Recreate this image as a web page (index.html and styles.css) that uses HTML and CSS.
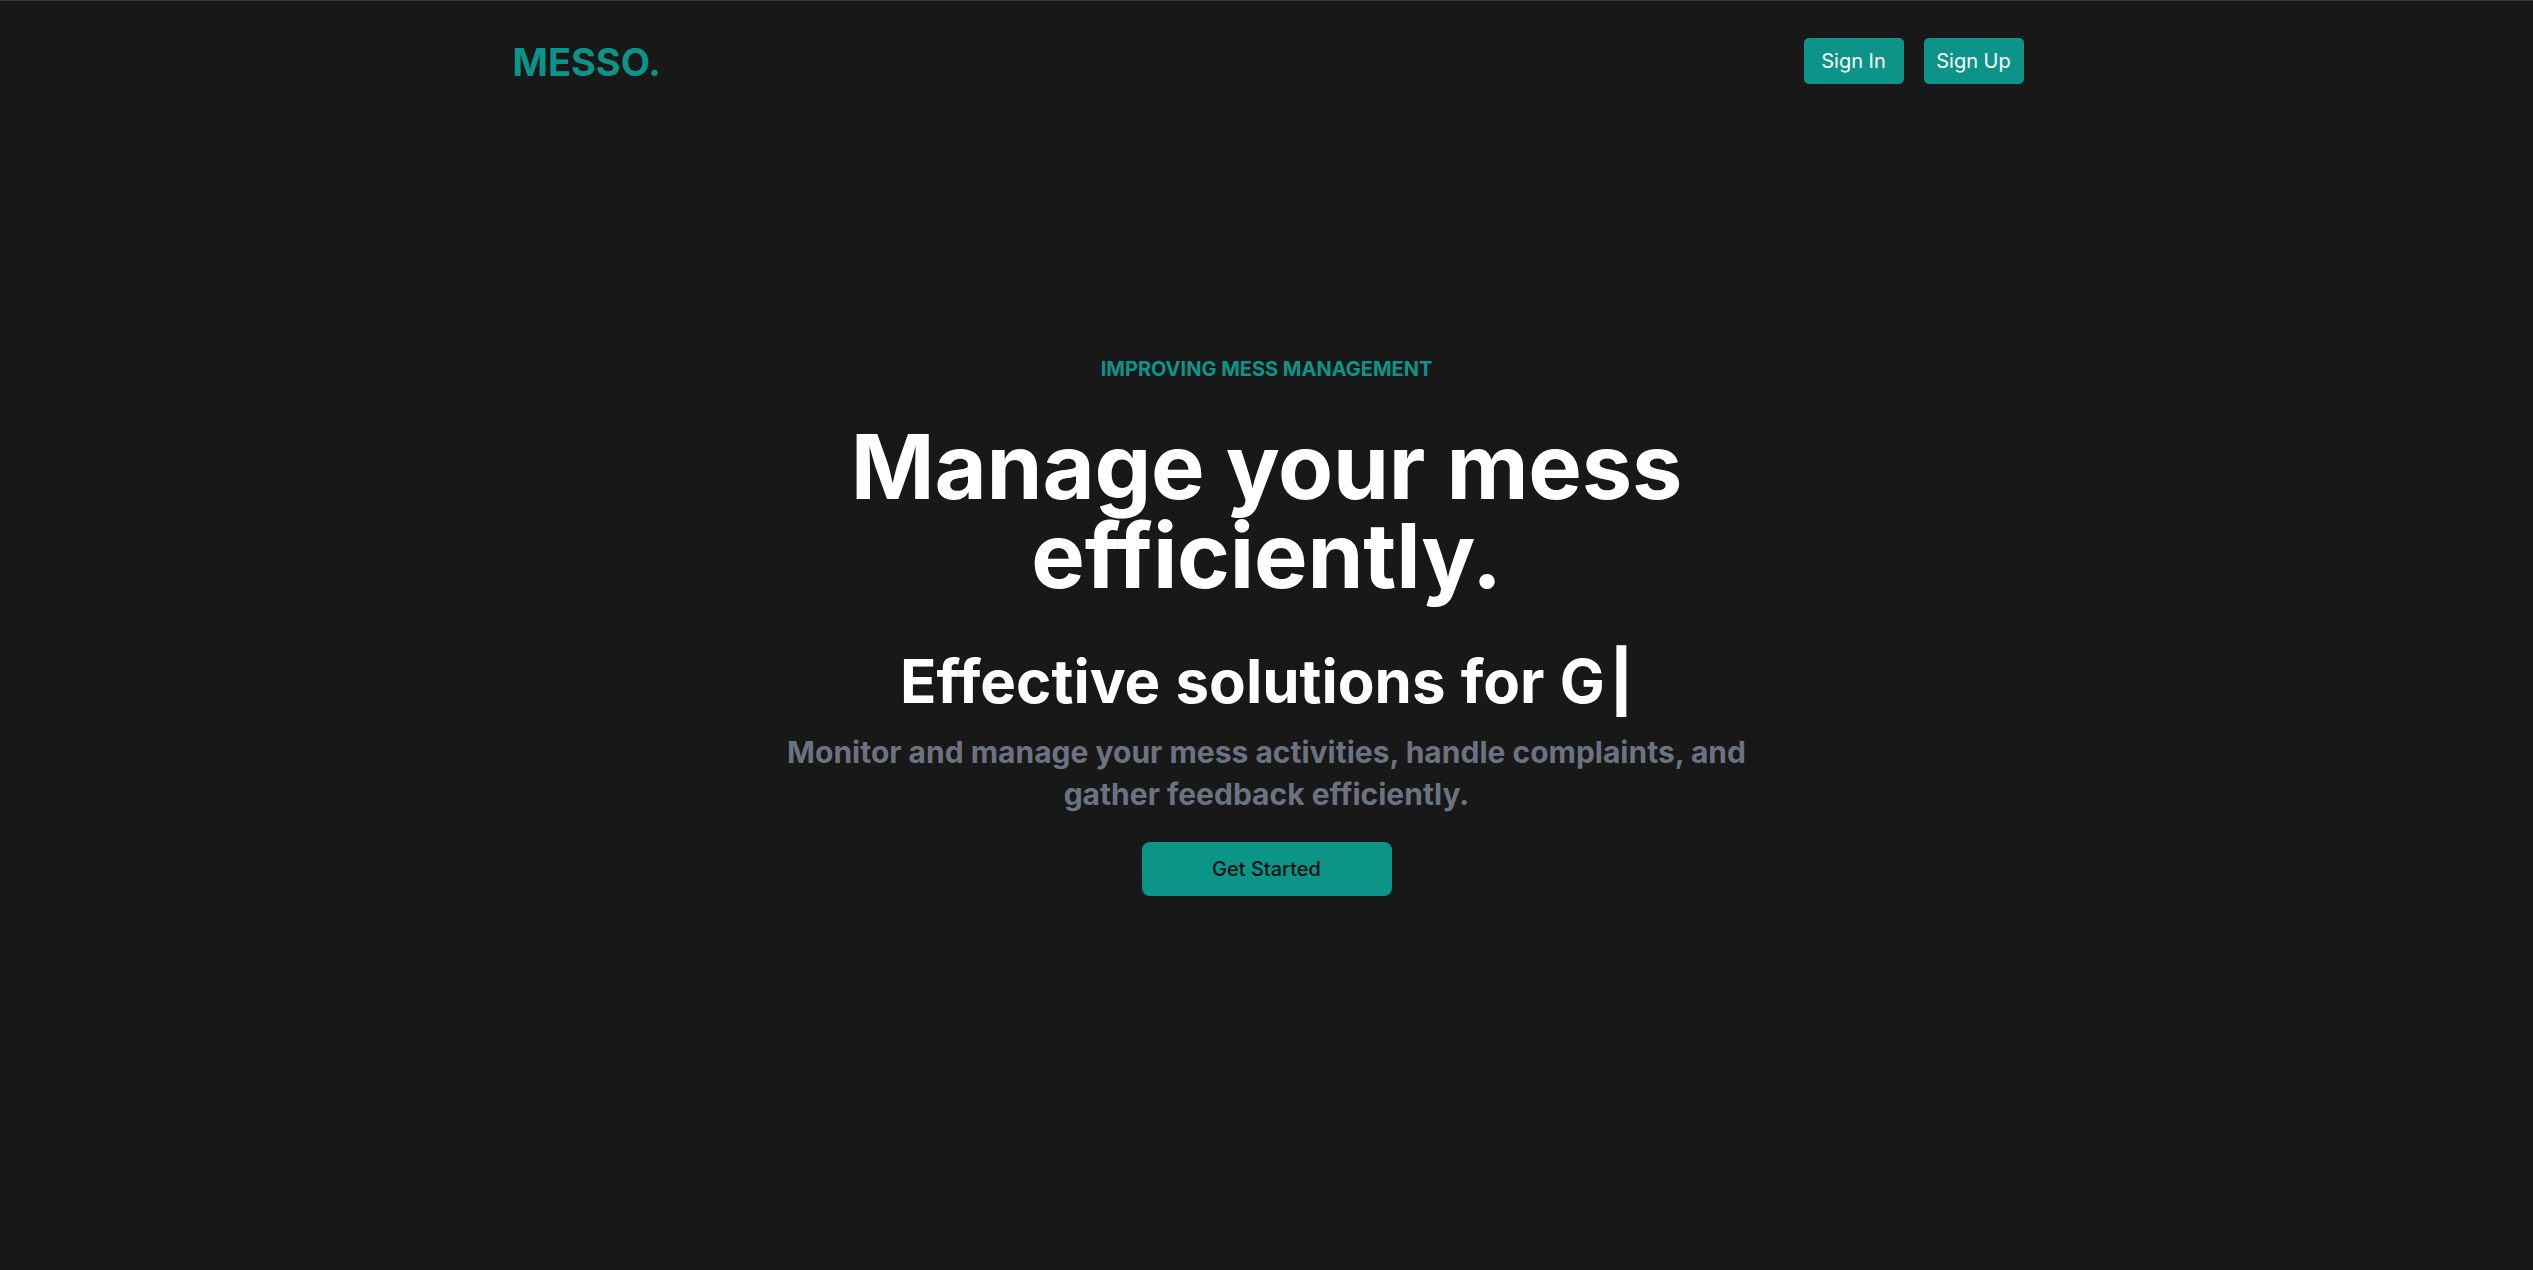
FILE: index.html
```html
<!DOCTYPE html>
<html lang="en">
<head>
<meta charset="utf-8">
<title>Messo</title>
<link rel="stylesheet" href="styles.css">
</head>
<body>
<div class="page">
  <header class="nav">
    <div class="logo">MESSO.</div>
    <div class="nav-actions">
      <button class="btn-nav">Sign In</button>
      <button class="btn-nav">Sign Up</button>
    </div>
  </header>
  <main class="hero">
    <p class="eyebrow">IMPROVING MESS MANAGEMENT</p>
    <h1 class="title"><span class="title-line">Manage your mess</span><span class="title-line">efficiently.</span></h1>
    <h2 class="subtitle">Effective solutions for&nbsp;G<span class="cursor">|</span></h2>
    <p class="lead">Monitor and manage your mess activities, handle complaints, and gather feedback efficiently.</p>
    <button class="btn-cta">Get Started</button>
  </main>
</div>
</body>
</html>
```
FILE: styles.css
```css
* { box-sizing: border-box; }
html, body { margin: 0; padding: 0; }
body {
  background: #181818;
  font-family: Inter, "Noto Sans", sans-serif;
  color: #ffffff;
  height: 1270px;
  overflow: hidden;
}
.page {
  border-top: 1px solid #3a3a3a;
  min-height: 100%;
}
.nav {
  width: 1514px;
  margin: 0 auto;
  padding: 37px 0 0 3px;
  display: flex;
  align-items: center;
  justify-content: space-between;
}
.logo {
  font-size: 38px;
  line-height: 42px;
  font-weight: 700;
  color: #0d9488;
  position: relative;
  top: 1px;
}
.nav-actions {
  display: flex;
  gap: 20px;
}
.btn-nav {
  font-family: Inter, "Noto Sans", sans-serif;
  font-size: 20px;
  line-height: 30px;
  padding: 8px 0;
  width: 100px;
  white-space: nowrap;
  background: #0d9488;
  color: #ffffff;
  border: none;
  border-radius: 5px;
}
.hero {
  display: flex;
  flex-direction: column;
  align-items: center;
  text-align: center;
  padding-top: 271px;
}
.eyebrow {
  margin: 0;
  font-size: 20px;
  line-height: 28px;
  font-weight: 700;
  color: #0d9488;
}
.title {
  margin: 39px 0 0;
  font-size: 90px;
  line-height: 89px;
  font-weight: 700;
  letter-spacing: -0.2px;
  display: flex;
  flex-direction: column;
  align-items: center;
}
.title-line {
  display: block;
}
.subtitle {
  margin: 45px 0 0;
  font-size: 60px;
  line-height: 72px;
  font-weight: 700;
  word-spacing: 1px;
}
.cursor {
  font-weight: 800;
  margin-left: 5px;
}
.lead {
  margin: 14px 0 0;
  max-width: 1010px;
  font-size: 30px;
  line-height: 42px;
  font-weight: 700;
  color: #6b7280;
}
.btn-cta {
  margin-top: 27px;
  font-family: Inter, "Noto Sans", sans-serif;
  font-size: 20px;
  line-height: 28px;
  font-weight: 500;
  padding: 13px 0;
  width: 250px;
  white-space: nowrap;
  background: #0d9488;
  color: #111111;
  border: none;
  border-radius: 8px;
}
```
